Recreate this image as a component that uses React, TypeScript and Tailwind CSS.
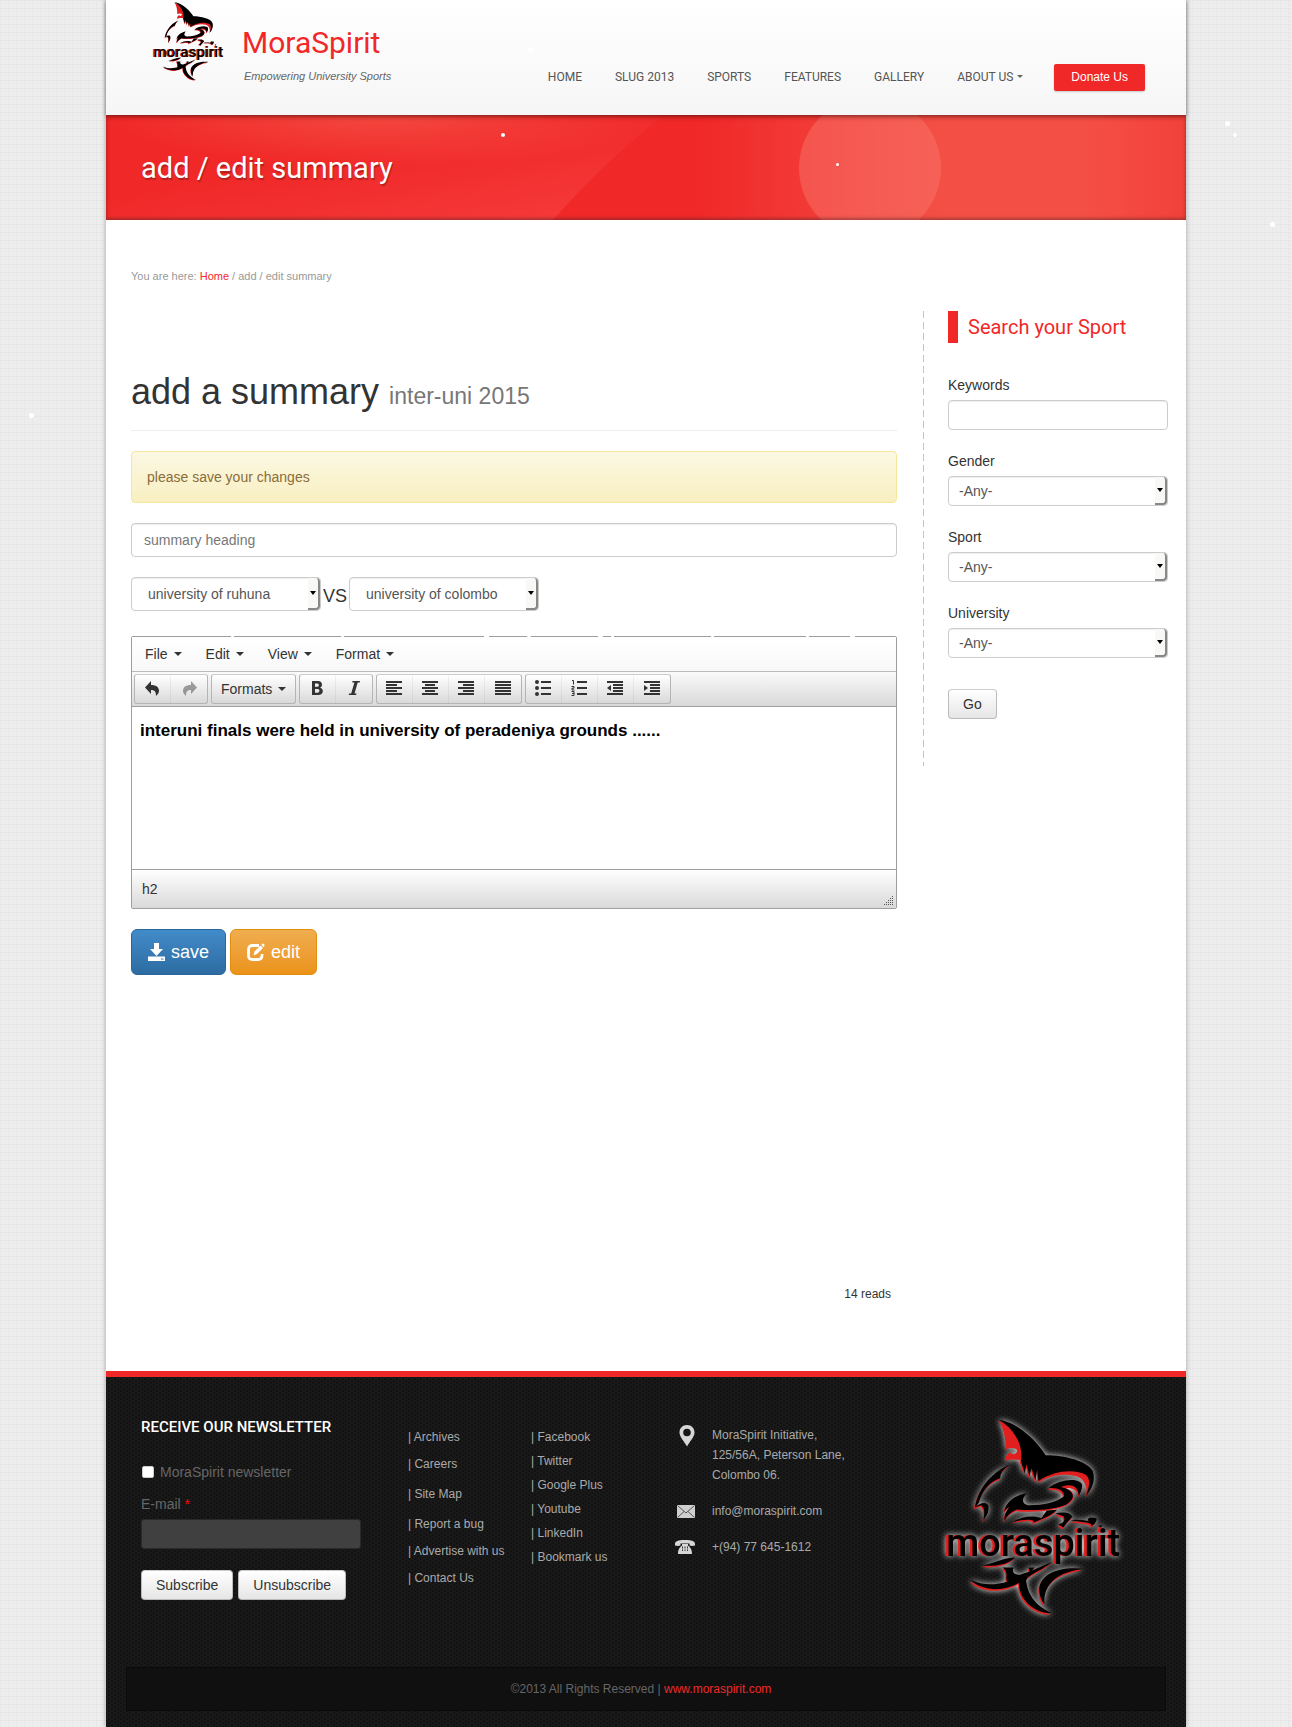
import { useId, type ReactNode } from "react";

function SharkLogo({ className }: { className: string }) {
  const shapes = (
    <>
      <path d="M295 184C350 192 402 238 437 291C495 291 560 308 578 338C588 365 575 395 558 412C568 385 572 362 558 350C525 332 465 335 415 368L411 335L406 366L394 330L388 354L379 318L374 346L362 308C370 270 350 215 295 184Z" />
      <path d="M333 318C278 337 233 390 224 448L236 433C246 398 268 370 300 360C300 342 314 328 333 318Z" />
      <path d="M224 448C242 430 262 430 265 445C267 465 255 476 249 488C252 468 256 452 243 441Z" />
      <path d="M312 462C315 432 345 410 380 405C362 422 366 440 388 441C430 441 470 432 492 414C492 396 472 388 445 390C480 360 540 358 546 380C547 395 540 405 536 414C536 388 518 372 482 386C520 394 532 418 500 438C460 456 400 458 350 454C328 464 318 476 314 488C308 478 322 452 328 446C320 450 316 456 312 462Z" />
      <path d="M337 492C362 474 402 470 424 480L440 457L471 455C455 472 430 482 398 494C410 484 380 480 337 492Z" />
      <path d="M466 466C490 460 512 464 517 476C505 488 496 498 490 508L474 498C488 498 498 486 490 474Z" />
      <path d="M512 487C530 482 552 486 568 490C554 480 574 474 590 481C588 494 582 500 574 503C578 492 545 492 512 487Z" />
      <path d="M594 502L608 502L602 508Z" />
      <path d="M245 622C280 618 300 600 345 598C325 620 280 626 245 622Z" />
      <path d="M308 628H340C334 645 345 650 360 650C395 640 420 626 455 612C420 642 384 648 378 668C382 705 402 742 455 765C400 767 354 720 357 674C310 702 246 700 210 665C250 685 290 680 322 670C312 660 328 645 308 628Z" />
      <path d="M385 628H404L390 643Z" />
      <path d="M550 632C490 625 430 640 418 685C415 710 425 730 433 738C430 695 450 645 550 632Z" />
    </>
  );
  return (
    <svg viewBox="120 170 560 610" className={className} role="img" aria-label="moraspirit">
      <g fill="#e21f1f" transform="translate(-3 5)">{shapes}</g>
      <path
        fill="#e21f1f"
        d="M297 188C345 215 375 262 364 307C345 302 330 303 314 308C316 294 322 285 331 283C336 292 350 289 351 276C345 266 325 268 316 274C317 245 312 215 297 188Z"
      />
      <path
        fill="#e21f1f"
        d="M415 368C465 335 525 332 558 350C570 362 568 385 560 408C560 380 552 362 530 354C495 344 450 350 418 372ZM482 386C518 372 538 390 537 412C530 396 515 388 498 390C525 400 530 425 500 440C515 420 515 398 482 386Z"
      />
      <g>{shapes}</g>
      <g fontFamily="Roboto, sans-serif" fontSize="114" fontWeight="500">
        <text x="130" y="593" fill="#e21f1f">moraspirit</text>
        <text x="138" y="593">moraspirit</text>
      </g>
    </svg>
  );
}

function Caret({ className = "" }: { className?: string }) {
  return (
    <span
      aria-hidden="true"
      className={`inline-block border-x-4 border-t-4 border-x-transparent border-t-[#333] align-middle ${className}`}
    />
  );
}

const selectBox =
  "block w-full appearance-none rounded border border-[#ccc] bg-white font-['Liberation_Sans',sans-serif] text-sm text-[#555] shadow-[inset_0_1px_1px_rgba(0,0,0,0.07)]";

function SelectArrow() {
  return (
    <span className="pointer-events-none absolute inset-y-px right-px flex w-3 items-center justify-center rounded-r border-r-2 border-b-2 border-[#888] bg-[#f8f8f6]">
      <span className="border-x-[3px] border-t-4 border-x-transparent border-t-black" />
    </span>
  );
}

function TeamSelect({ label, value }: { label: string; value: string }) {
  return (
    <div className="relative w-[190px]">
      <select aria-label={label} defaultValue={value} className={`${selectBox} h-[34px] pl-4`}>
        <option>university of ruhuna</option>
        <option>university of colombo</option>
      </select>
      <SelectArrow />
    </div>
  );
}

function AnySelect({ label }: { label: string }) {
  const id = useId();
  return (
    <div className="mb-[21px]">
      <label htmlFor={id} className="mb-1 block leading-[21px]">{label}</label>
      <div className="relative">
        <select id={id} className={`${selectBox} h-[30px] pl-[10px]`}>
          <option>-Any-</option>
        </select>
        <SelectArrow />
      </div>
    </div>
  );
}

function ToolGroup({ children }: { children: ReactNode }) {
  return (
    <div className="flex h-[30px] divide-x divide-black/5 rounded-[3px] border border-[#b5b5b5] border-t-[#ccc] bg-linear-to-b from-white to-[#d9d9d9]">
      {children}
    </div>
  );
}

function Tool({ label, children }: { label: string; children: ReactNode }) {
  return (
    <button type="button" aria-label={label} className="flex w-9 items-center justify-center pb-0.5 text-[#333]">
      <svg width="17" height="16" viewBox="0 0 17 16" fill="currentColor">{children}</svg>
    </button>
  );
}

function Lines({ rows }: { rows: number[][] }) {
  return (
    <>
      {rows.map(([x, w], i) => (
        <rect key={i} x={x} y={1 + i * 3} width={w} height="2" />
      ))}
    </>
  );
}

const navItems = ["HOME", "SLUG 2013", "SPORTS", "FEATURES", "GALLERY"];

const flakes = [
  "left-[501px] top-[133px] size-1",
  "left-[836px] top-[163px] size-[3px]",
  "left-[1225px] top-[121px] size-[5px]",
  "left-[1233px] top-[133px] size-1",
  "left-[1270px] top-[222px] size-[5px]",
  "left-[29px] top-[413px] size-[5px]",
  "left-[528px] top-[47px] size-[5px]",
  "left-[726px] top-[27px] size-[3px]",
  "left-[231px] top-[635px] size-[3px]",
  "left-[341px] top-[635px] size-[3px]",
  "left-[484px] top-[634px] size-[5px]",
  "left-[527px] top-[635px] size-1",
  "left-[598px] top-[634px] size-[5px]",
  "left-[611px] top-[635px] size-[3px]",
  "left-[711px] top-[635px] size-[3px]",
  "left-[806px] top-[635px] size-[3px]",
  "left-[850px] top-[634px] size-[5px]",
];

const btn =
  "h-[30px] rounded border border-[#bbb] border-t-[#ccc] bg-linear-to-b from-white to-[#e6e6e6] px-[14px] text-sm text-[#333]";

function Header() {
  return (
    <header className="relative z-10 flex min-h-[115px] justify-between bg-linear-to-b from-white to-[#f6f6f6] pr-[41px] pl-[45px] shadow-[0_1px_4px_rgba(0,0,0,0.4)]">
      <div className="flex gap-4">
        <SharkLogo className="h-[82px] w-[75px]" />
        <div className="pt-[25px]">
          <a href="#" className="block font-[Roboto,sans-serif] text-[30px] leading-9 text-[#f02828]">MoraSpirit</a>
          <p className="mt-[7px] pl-0.5 text-[11px] leading-4 text-[#666] italic">Empowering University Sports</p>
        </div>
      </div>
      <nav className="mt-16 flex h-[27px] items-center gap-[33px] font-[Roboto,sans-serif] text-xs text-[#555]">
        {navItems.map((item) => (
          <a key={item} href="#" className="pb-0.5">{item}</a>
        ))}
        <a href="#" className="-mr-0.5 flex items-center gap-1 pb-0.5">
          ABOUT US
          <span className="border-x-[3px] border-t-[3px] border-x-transparent border-t-[#666]" />
        </a>
        <a
          href="#"
          className="flex h-[27px] items-center rounded-[2px] bg-[#f02828] px-[17px] pb-0.5 font-['Liberation_Sans',sans-serif] text-white shadow-[0_1px_2px_rgba(0,0,0,0.2)]"
        >
          Donate Us
        </a>
      </nav>
    </header>
  );
}

function Banner() {
  return (
    <div className="relative flex h-[105px] items-center overflow-hidden bg-[#f02828] px-[35px]">
      <svg className="absolute inset-0 size-full" viewBox="0 0 1080 105" preserveAspectRatio="none" aria-hidden="true">
        <defs>
          <radialGradient id="glow" cx="0.5" cy="0" r="0.5">
            <stop offset="0" stopColor="#f4483f" />
            <stop offset="1" stopColor="#f4483f" stopOpacity="0" />
          </radialGradient>
          <linearGradient id="corner" x1="0" y1="0" x2="1" y2="1">
            <stop offset="0.4" stopColor="#f55" stopOpacity="0" />
            <stop offset="1" stopColor="#f55" stopOpacity="0.45" />
          </linearGradient>
          <linearGradient id="side">
            <stop offset="0" stopColor="#f44f45" stopOpacity="0" />
            <stop offset="0.5" stopColor="#f44f45" />
            <stop offset="0.8" stopColor="#f44f45" />
            <stop offset="1" stopColor="#f2403a" />
          </linearGradient>
        </defs>
        <path d="M0 0H558Q500 45 447 105H0Z" fill="url(#glow)" />
        <path d="M0 0H558Q500 45 447 105H0Z" fill="url(#corner)" />
        <rect x="590" width="490" height="105" fill="url(#side)" />
        <circle cx="764" cy="53" r="71" fill="#f9776f" fillOpacity="0.45" />
      </svg>
      <h1 className="relative font-[Roboto,sans-serif] text-[29px] leading-9 text-white [text-shadow:1px_2px_1px_rgba(0,0,0,0.25)]">
        add / edit summary
      </h1>
      <div className="absolute inset-0 shadow-[inset_0_-2px_3px_rgba(90,40,40,0.45),inset_0_3px_4px_rgba(120,20,20,0.25)]" />
    </div>
  );
}

function Editor() {
  return (
    <div className="rounded-[2px] border border-[#9e9e9e]">
      <div className="flex h-[34px] items-center gap-6 bg-linear-to-b from-white to-[#f8f8f8] px-[13px]">
        {["File", "Edit", "View", "Format"].map((item) => (
          <button key={item} type="button" className="flex items-center gap-1.5">
            {item}
            <Caret />
          </button>
        ))}
      </div>
      <div className="flex h-9 gap-[3px] border-y border-t-[#bbb] border-b-[#9e9e9e] bg-linear-to-b from-[#fafafa] to-[#d9d9d9] px-0.5 pt-0.5">
        <ToolGroup>
          <Tool label="Undo">
            <path d="M7 1V5C12 5 15 7 15 11C15 13 13 15 12 16C12 12 11 10 7 10V14L1 7.500Z" />
          </Tool>
          <Tool label="Redo">
            <path opacity="0.45" d="M10 1V5C5 5 2 7 2 11C2 13 4 15 5 16C5 12 6 10 10 10V14L16 7.500Z" />
          </Tool>
        </ToolGroup>
        <ToolGroup>
          <button type="button" className="flex items-center gap-1.5 px-[9px]">
            Formats
            <Caret />
          </button>
        </ToolGroup>
        <ToolGroup>
          <Tool label="Bold">
            <path fillRule="evenodd" d="M3 1H9C12 1 13 3 13 4.800C13 6.200 12.300 7.200 11 7.700C13 8.200 13.800 9.600 13.800 11C13.800 13.600 12 15 9 15H3ZM6 3.500V6.800H8.300C10.300 6.800 10.300 3.500 8.300 3.500ZM6 9V12.700H8.700C11 12.700 11 9 8.700 9Z" />
          </Tool>
          <Tool label="Italic">
            <path d="M6.500 1H14L13.700 2.500H11.700L8.500 13.500H10.500L10.100 15H2.700L3.100 13.500H5.200L8.400 2.500H6.200Z" />
          </Tool>
        </ToolGroup>
        <ToolGroup>
          <Tool label="Align left"><Lines rows={[[0, 16], [0, 11], [0, 16], [0, 11], [0, 16]]} /></Tool>
          <Tool label="Align center"><Lines rows={[[0, 16], [3, 10], [0, 16], [3, 10], [0, 16]]} /></Tool>
          <Tool label="Align right"><Lines rows={[[0, 16], [5, 11], [0, 16], [5, 11], [0, 16]]} /></Tool>
          <Tool label="Justify"><Lines rows={[[0, 16], [0, 16], [0, 16], [0, 16], [0, 16]]} /></Tool>
        </ToolGroup>
        <ToolGroup>
          <Tool label="Bullet list">
            <circle cx="2" cy="2" r="2" /><circle cx="2" cy="8" r="2" /><circle cx="2" cy="14" r="2" />
            <rect x="6" y="1" width="10" height="2" /><rect x="6" y="7" width="10" height="2" /><rect x="6" y="13" width="10" height="2" />
          </Tool>
          <Tool label="Numbered list">
            <path d="M1 .5H2.500V4.500M.5 6.500H3V8.200H1V10H3.500M.5 11.500H3V15.500H.5M1 13.500H3" fill="none" stroke="currentColor" />
            <rect x="6" y="1" width="10" height="2" /><rect x="6" y="7" width="10" height="2" /><rect x="6" y="13" width="10" height="2" />
          </Tool>
          <Tool label="Decrease indent"><Lines rows={[[0, 16], [6, 10], [6, 10], [6, 10], [0, 16]]} /><path d="M4 5V11L0 8Z" /></Tool>
          <Tool label="Increase indent"><Lines rows={[[0, 16], [6, 10], [6, 10], [6, 10], [0, 16]]} /><path d="M0 5V11L4 8Z" /></Tool>
        </ToolGroup>
      </div>
      <textarea
        aria-label="Summary text"
        className="block h-[162px] w-full resize-none bg-white px-2 py-3 text-[17px] leading-6 font-bold text-black"
        defaultValue="interuni finals were held in university of peradeniya grounds ......"
      />
      <div className="relative flex h-[39px] items-center border-t border-[#9e9e9e] bg-linear-to-b from-white to-[#d9d9d9] px-[10px]">
        h2
        <svg className="absolute right-0.5 bottom-0.5" width="11" height="11" fill="#555" aria-hidden="true">
          {[0, 1, 2, 3, 4].flatMap((row) =>
            Array.from({ length: row + 1 }, (_, i) => <rect key={`${row}-${i}`} x={9 - i * 2} y={1 + row * 2} width="1" height="1" />),
          )}
        </svg>
      </div>
    </div>
  );
}

const bigBtn = "flex h-[46px] items-center gap-1.5 rounded-md border text-lg text-white";

function Main() {
  return (
    <div className="min-w-0 flex-1">
      <div className="mt-[58px] border-b border-[#eee] pb-[11px]">
        <h2 className="text-4xl leading-[46px] text-[#333]">
          add a summary <small className="text-[23px] text-[#777]">inter-uni 2015</small>
        </h2>
      </div>
      <div className="mt-5 rounded border border-[#f5e79e] bg-linear-to-b from-[#fcf8e3] to-[#f8efc0] p-[15px] leading-5 text-[#8a6d3b]">
        please save your changes
      </div>
      <input
        aria-label="Summary heading"
        placeholder="summary heading"
        className="mt-5 block h-[34px] w-full rounded border border-[#ccc] bg-white px-3 text-sm shadow-[inset_0_1px_1px_rgba(0,0,0,0.07)] placeholder:text-[#777]"
      />
      <div className="mt-5 mb-[25px] flex items-center gap-0.5">
        <TeamSelect label="First team" value="university of ruhuna" />
        <span className="pt-1 text-lg leading-5">VS</span>
        <TeamSelect label="Second team" value="university of colombo" />
      </div>
      <Editor />
      <div className="mt-5 flex gap-1">
        <button type="button" className={`${bigBtn} border-[#2b669a] bg-linear-to-b from-[#428bca] to-[#2d6ca2] px-4`}>
          <svg width="17" height="18" viewBox="0 0 17 18" fill="currentColor" aria-hidden="true">
            <path d="M6 0H11V6H15L8.500 13L2 6H6Z" />
            <path fillRule="evenodd" d="M0 13.500H17V18H0ZM13 15.500V16.500H15.500V15.500Z" />
          </svg>
          save
        </button>
        <button type="button" className={`${bigBtn} border-[#e38d13] bg-linear-to-b from-[#f0ad4e] to-[#eb9316] px-4`}>
          <svg width="18" height="18" viewBox="0 0 18 18" aria-hidden="true">
            <path d="M12 2.500H5.500C3 2.500 1.500 4 1.500 6.500V12.500C1.500 15 3 16.500 5.500 16.500H11C13.500 16.500 15 15 15 12.500V11" fill="none" stroke="currentColor" strokeWidth="2.800" />
            <path d="M6.500 12.500L7.500 8.500L13.500 2.500L16 5L10 11Z" fill="currentColor" />
            <path d="M14.300 1.700L15.500 .5C16.200 .2 17.800 1.800 17.500 2.500L16.700 4.200Z" fill="currentColor" />
          </svg>
          edit
        </button>
      </div>
      <p className="mt-[309px] pr-1.5 text-right text-xs leading-5">14 reads</p>
    </div>
  );
}

function Sidebar() {
  return (
    <aside className="flex h-[455px] w-[245px] shrink-0">
      <div className="w-px bg-[repeating-linear-gradient(#c4c4c4_0_7px,transparent_7px_11px)]" />
      <form className="ml-6 min-w-0 flex-1" onSubmit={(e) => e.preventDefault()}>
        <h3 className="mb-8 border-l-10 border-[#f02828] pl-[10px] font-[Roboto,sans-serif] text-xl leading-8 text-[#f02828]">
          Search your Sport
        </h3>
        <div className="mb-[21px]">
          <label htmlFor="keywords" className="mb-1 block leading-[21px]">Keywords</label>
          <input id="keywords" className="block h-[30px] w-full rounded border border-[#ccc] bg-white px-2 shadow-[inset_0_1px_1px_rgba(0,0,0,0.07)]" />
        </div>
        <AnySelect label="Gender" />
        <AnySelect label="Sport" />
        <AnySelect label="University" />
        <button type="submit" className={`${btn} mt-[10px]`}>Go</button>
      </form>
    </aside>
  );
}

const siteLinks = [["Archives", "h-[27px]"], ["Careers", "h-[30px]"], ["Site Map", "h-[30px]"], ["Report a bug", "h-[27px]"], ["Advertise with us", "h-[27px]"], ["Contact Us", "h-[27px]"]];
const socialLinks = ["Facebook", "Twitter", "Google Plus", "Youtube", "LinkedIn", "Bookmark us"];

function Footer() {
  return (
    <footer className="border-t-6 border-[#f02828] bg-[#191919] bg-[radial-gradient(#121212_1px,transparent_1px),radial-gradient(#121212_1px,transparent_1px)] bg-[length:6px_4px] bg-[position:0_0,3px_2px] px-5 pb-4 text-xs text-[#aaa]">
      <div className="grid min-h-[290px] grid-cols-[267fr_123fr_144fr_265fr_211fr] px-[15px] pt-10">
        <form onSubmit={(e) => e.preventDefault()} className="text-sm text-[#666]">
          <h3 className="font-[Roboto,sans-serif] text-[15px] leading-5 font-medium text-white">RECEIVE OUR NEWSLETTER</h3>
          <div className="mt-[25px] flex items-center gap-1.5 pl-px leading-5">
            <input id="newsletter" type="checkbox" className="size-3 appearance-none rounded-[2px] border border-[#ccc] bg-white" />
            <label htmlFor="newsletter">MoraSpirit newsletter</label>
          </div>
          <label htmlFor="email" className="mt-3 block leading-5">
            E-mail <span className="text-[#f00]">*</span>
          </label>
          <input id="email" type="email" className="mt-[5px] block h-[30px] w-[220px] rounded-[3px] border border-[#2a2a2a] bg-[#404040] px-2 text-white" />
          <div className="mt-[21px] flex gap-[5px]">
            <button type="submit" className={btn}>Subscribe</button>
            <button type="button" className={btn}>Unsubscribe</button>
          </div>
        </form>
        <ul className="pt-[10px] leading-5">
          {siteLinks.map(([label, height]) => (
            <li key={label} className={height}>| <a href="#">{label}</a></li>
          ))}
        </ul>
        <ul className="pt-[10px] leading-5">
          {socialLinks.map((label) => (
            <li key={label} className="h-6">| <a href="#">{label}</a></li>
          ))}
        </ul>
        <div className="flex flex-col gap-4 pt-2 leading-5">
          <div className="flex gap-[17px]">
            <svg width="20" height="22" viewBox="0 0 20 22" className="shrink-0" aria-hidden="true">
              <path fillRule="evenodd" fill="#d6d6d6" d="M12 0C16.500 0 19.500 3.400 19.500 7.500C19.500 12 15 16 12 21.500C9 16 4.500 12 4.500 7.500C4.500 3.400 7.500 0 12 0ZM12 3.700A3.800 3.800 0 1 0 12 11.300A3.800 3.800 0 1 0 12 3.700Z" />
            </svg>
            <address className="not-italic">
              MoraSpirit Initiative,<br />125/56A, Peterson Lane,<br />Colombo 06.
            </address>
          </div>
          <div className="flex items-center gap-[17px]">
            <svg width="20" height="13" viewBox="0 0 20 13" aria-hidden="true">
              <path fill="#cfcfcf" d="M2 0H20V13H2Z" />
              <path d="M2.500 .5L11 8L19.500 .5M2.500 12.500L9 6.500M19.500 12.500L13 6.500" fill="none" stroke="#555" />
            </svg>
            <a href="#">info@moraspirit.com</a>
          </div>
          <div className="flex items-center gap-[17px]">
            <svg width="20" height="14" viewBox="0 0 20 14" aria-hidden="true">
              <path fill="#d6d6d6" d="M0 4C0 1 3 0 10 0S20 1 20 4V5.500C18 6 16 6 14.500 5.500V3.500H5.500V5.500C4 6 2 6 0 5.500Z" />
              <path fill="#d6d6d6" d="M7 4H13V5.500C15 7 17 9 17 14H3C3 9 5 7 7 5.500Z" />
              <path d="M7.500 6.500V11M10 6.500V11M12.500 6.500V11" stroke="#333" strokeDasharray="2 1" />
            </svg>
            <span>+(94) 77 645-1612</span>
          </div>
        </div>
        <SharkLogo className="-mt-0.5 h-[203px] w-[187px] drop-shadow-[0_0_3px_rgba(255,255,255,0.9)]" />
      </div>
      <div className="flex h-11 items-center justify-center border border-[#0a0a0a] bg-[#101010] pr-[10px] text-[#666]">
        <p>
          ©2013 All Rights Reserved | <a href="#" className="text-[#f02828]">www.moraspirit.com</a>
        </p>
      </div>
    </footer>
  );
}

export default function App() {
  return (
    <div className="relative min-h-screen bg-[#ededed] bg-[linear-gradient(90deg,#ededed_1px,transparent_1px),linear-gradient(#ededed_1px,transparent_1px),linear-gradient(#e0e0e0_1px,transparent_1px),linear-gradient(90deg,#e3e3e3_1px,transparent_1px)] bg-[length:2px_8px,8px_2px,8px_8px,8px_8px] bg-[position:1px_0,0_1px,0_0,0_0] font-['Liberation_Sans',Arial,sans-serif] text-sm text-[#333]">
      <div className="mx-auto w-full max-w-[1080px] bg-white shadow-[0_0_5px_rgba(0,0,0,0.3)]">
        <Header />
        <Banner />
        <p className="px-[25px] pt-[46px] text-[11px] leading-5 text-[#999]">
          You are here: <a href="#" className="text-[#f02828]">Home</a> / add / edit summary
        </p>
        <div className="flex gap-[26px] pt-[25px] pr-[18px] pb-[67px] pl-[25px]">
          <Main />
          <Sidebar />
        </div>
        <Footer />
      </div>
      {flakes.map((place) => (
        <span key={place} aria-hidden="true" className={`pointer-events-none absolute z-20 rounded-full bg-white ${place}`} />
      ))}
    </div>
  );
}
